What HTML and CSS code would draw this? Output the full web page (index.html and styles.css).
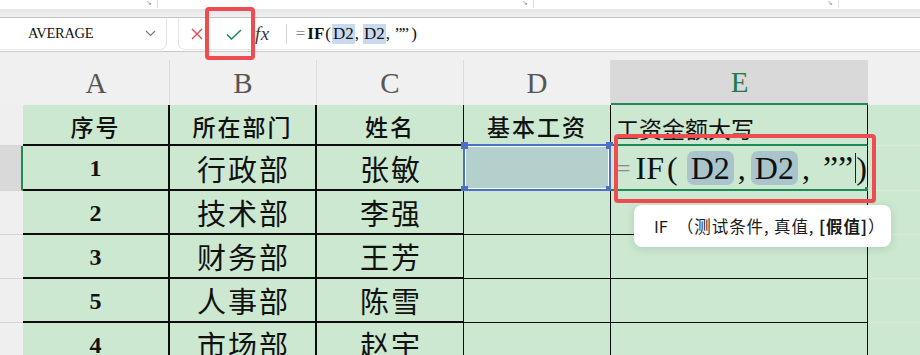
FILE: index.html
```html
<!DOCTYPE html>
<html lang="zh">
<head>
<meta charset="utf-8">
<title>IF</title>
<link rel="stylesheet" href="styles.css">
</head>
<body>
<div class="app">
  <div class="ribbon">
    <div class="rgroup g1"><span class="launch">↘</span><span class="rsep"></span></div>
    <div class="rgroup g2"><span class="launch">↘</span><span class="rsep"></span></div>
    <div class="rgroup g3"><span class="launch">↘</span><span class="rsep"></span></div>
  </div>
  <div class="band"></div>
  <div class="fbar">
    <div class="namebox">
      <span class="name">AVERAGE</span>
      <svg class="chev" width="11" height="7" viewBox="0 0 11 7"><polyline points="1,1 5.5,5.5 10,1" fill="none" stroke="#7a7a7a" stroke-width="1.2"/></svg>
    </div>
    <div class="fbox">
      <svg class="cancel" width="12" height="12" viewBox="0 0 12 12"><path d="M1 1 L11 11 M11 1 L1 11" stroke="#d8474c" stroke-width="1.3"/></svg>
      <svg class="ok" width="16" height="11" viewBox="0 0 16 11"><polyline points="1,5.5 5.5,10 15,1" fill="none" stroke="#1f8a5a" stroke-width="1.6"/></svg>
      <span class="fx">fx</span>
      <span class="fsep"></span>
      <div class="ftext"><span class="feq">=</span><b class="fif">IF</b><span class="fp">(</span><span class="fref">D2</span><span class="fc">,</span><span class="fref">D2</span><span class="fc">,</span><span class="fq">””</span><span class="fp">)</span></div>
    </div>
  </div>
  <div class="sheet">
    <div class="corner"></div>
    <div class="ch">A</div>
    <div class="ch">B</div>
    <div class="ch">C</div>
    <div class="ch">D</div>
    <div class="ch che">E</div>
    <div class="ch chf"></div>

    <div class="rh"></div>
    <div class="c ca hd">序号</div>
    <div class="c cb hd">所在部门</div>
    <div class="c cc hd">姓名</div>
    <div class="c cd hd">基本工资</div>
    <div class="c ce hd hde">工资金额大写</div>
    <div class="c cf"></div>

    <div class="rh rhsel"></div>
    <div class="c ca num">1</div>
    <div class="c cb dt">行政部</div>
    <div class="c cc dt">张敏</div>
    <div class="c cd sel"><i class="hdl h1"></i><i class="hdl h2"></i><i class="hdl h3"></i><i class="hdl h4"></i></div>
    <div class="c ce edit"><span class="eq">=</span><span class="eif">IF</span><span class="ep">(</span><span class="eref">D2</span><span class="ec">,</span><span class="eref">D2</span><span class="ec">,</span><span class="equ">””</span><span class="caret"></span><span class="ep2">)</span><i class="fill"></i></div>
    <div class="c cf"></div>

    <div class="rh"></div>
    <div class="c ca num">2</div>
    <div class="c cb dt">技术部</div>
    <div class="c cc dt">李强</div>
    <div class="c cd"></div>
    <div class="c ce"></div>
    <div class="c cf"></div>

    <div class="rh"></div>
    <div class="c ca num">3</div>
    <div class="c cb dt">财务部</div>
    <div class="c cc dt">王芳</div>
    <div class="c cd"></div>
    <div class="c ce"></div>
    <div class="c cf"></div>

    <div class="rh"></div>
    <div class="c ca num">5</div>
    <div class="c cb dt">人事部</div>
    <div class="c cc dt">陈雪</div>
    <div class="c cd"></div>
    <div class="c ce"></div>
    <div class="c cf"></div>

    <div class="rh"></div>
    <div class="c ca num">4</div>
    <div class="c cb dt">市场部</div>
    <div class="c cc dt">赵宇</div>
    <div class="c cd"></div>
    <div class="c ce"></div>
    <div class="c cf"></div>
  </div>

  <div class="mark mark1"></div>
  <div class="mark mark2"></div>
  <div class="tip">IF<span class="tipargs">（测试条件, 真值, <b>[假值]</b>）</span></div>
</div>
</body>
</html>
```
FILE: styles.css
```css
* { box-sizing: border-box; }
html, body { margin: 0; padding: 0; }
body { width: 920px; height: 355px; overflow: hidden; background: #f0f0f0; font-family: "Liberation Serif", serif; }
.app { position: relative; width: 920px; height: 355px; overflow: hidden; }

.ribbon { height: 9px; background: #fff; position: relative; display: flex; }
.rgroup { display: flex; align-items: flex-start; height: 9px; }
.g1 { margin-left: 146px; }
.g2 { margin-left: 364px; }
.g3 { margin-left: 293px; }
.launch { font-family: "DejaVu Sans", sans-serif; font-size: 7px; line-height: 6px; color: #8a8a8a; width: 10px; }
.rsep { width: 1px; height: 8px; background: #dcdcdc; margin-left: 1px; }

.band { height: 9px; background: linear-gradient(#e4e4e4, #f1f1f1); border-bottom: 1px solid #c4c4c4; }

.fbar { height: 34px; background: #fff; border-bottom: 1px solid #c8c8c8; display: flex; align-items: stretch; padding-bottom: 1px; }
.namebox { width: 173px; margin-left: -6px; border: 1px solid #e4e4e4; border-top: none; border-radius: 0 0 7px 7px; display: flex; align-items: center; padding-left: 33px; }
.name { font-family: "Liberation Serif", serif; font-size: 14.5px; color: #111; letter-spacing: -0.3px; }
.chev { margin-left: auto; margin-right: 10px; }
.fbox { flex: 1; margin-left: 11px; border: 1px solid #e4e4e4; border-top: none; border-right: none; border-radius: 0 0 0 7px; display: flex; align-items: center; padding-left: 12px; }
.cancel { margin-top: 1px; }
.ok { margin-left: 23px; margin-top: 1px; }
.fx { font-family: "Liberation Serif", serif; font-style: italic; font-size: 19px; color: #3a3a3a; margin-left: 13px; letter-spacing: 0.5px; }
.fsep { width: 1px; height: 20px; background: #d4d4d4; margin-left: 16px; }
.ftext { margin-left: 9px; font-family: "Liberation Serif", serif; font-size: 17px; color: #111; display: flex; align-items: center; }
.feq { color: #888; margin-right: 2px; }
.fif { font-weight: 700; }
.fp { margin: 0 1px; }
.fref { background: #c9d9ef; padding: 0 1px; }
.fc { margin-right: 4px; }
.fq { margin: 0 2px 0 1px; letter-spacing: -1px; }

.sheet { padding-top: 8px; display: grid; grid-template-columns: 23px 147px 147px 147px 147px 257px 52px; grid-template-rows: 45px 41px 45px 44px 44px 44px 44px; }
.corner { background: #f0f0f0; }
.ch { background: #f0f0f0; border-right: 1px solid #dcdcdc; font-family: "Liberation Serif", serif; font-size: 29px; color: #555; display: flex; align-items: center; justify-content: center; padding-top: 2px; }
.che { background: #d9d9d9; color: #1e7a4c; border-bottom: 2px solid #1e8a55; border-right: none; }
.chf { border-right: none; }

.rh { background: #efefef; border-bottom: 1px solid #d6d6d6; }
.rhsel { background: #d9d9d9; border-right: 2px solid #1e8a55; }

.c { background: #cce8d0; display: flex; align-items: center; justify-content: center; color: #111; position: relative; }
.ca, .cb { border-right: 2px solid #0d0d0d; border-bottom: 2px solid #0d0d0d; }
.cc { border-right: 1px solid #0d0d0d; border-bottom: 2px solid #0d0d0d; }
.cd, .ce { border-right: 1px solid #0d0d0d; border-bottom: 1px solid #0d0d0d; }
.cf { border-bottom: 1px solid #d9ecdb; }

.hd { font-family: "Noto Sans CJK SC", sans-serif; font-size: 23px; font-weight: 500; letter-spacing: 2px; padding-top: 2px; }
.hde { justify-content: flex-start; padding-left: 5px; font-weight: 400; letter-spacing: 0; font-size: 23px; padding-top: 6px; border-bottom: 2px solid #1e8a55; }
.dt { font-family: "Noto Sans CJK SC", sans-serif; font-size: 29px; font-weight: 400; letter-spacing: 2px; padding-left: 2px; }
.num { font-family: "Liberation Serif", serif; font-size: 24px; font-weight: 700; padding-top: 2px; }

.sel { background: #b4d0cd; border: 2px solid #4a70c9; box-shadow: inset 0 0 0 1px #fff; margin: -2px 0 0 -1px; }
.hdl { position: absolute; width: 7px; height: 7px; background: #4a70c9; }
.h1 { left: -4px; top: -4px; }
.h2 { right: -4px; top: -4px; }
.h3 { left: -4px; bottom: -4px; }
.h4 { right: -4px; bottom: -4px; }

.edit { justify-content: flex-start; padding-left: 6px; font-family: "Liberation Serif", serif; font-size: 32px; border-bottom: 2px solid #1e8a55; padding-top: 1px; }
.eq { color: #8a8a8a; font-size: 24px; margin-right: 5px; }
.ep { margin: 0 9px 0 3px; }
.eref { background: #a9c4ca; border-radius: 7px; padding: 2px 4px; line-height: 30px; }
.ec { margin: 0 5px 0 4px; }
.equ { margin-left: 8px; letter-spacing: 0; font-size: 34px; }
.caret { width: 1px; height: 30px; background: #222; margin-left: 2px; }
.ep2 { margin-left: 1px; }
.fill { position: absolute; right: -3px; bottom: -3px; width: 5px; height: 5px; background: #1e8a55; }

.mark { position: absolute; border: 4px solid #ee4c51; border-radius: 4px; }
.mark1 { left: 205px; top: 7px; width: 50px; height: 53px; }
.mark2 { left: 614px; top: 134px; width: 262px; height: 69px; }

.tip { position: absolute; left: 634px; top: 205px; width: 257px; height: 42px; background: #fff; border-radius: 8px; box-shadow: 0 2px 10px rgba(0,0,0,0.12); font-family: "Noto Sans CJK SC", sans-serif; font-size: 16.5px; color: #1a1a1a; display: flex; align-items: center; padding-left: 20px; }
.tipargs { margin-left: 9px; letter-spacing: 0.9px; }
.tip b { font-weight: 700; }
```
